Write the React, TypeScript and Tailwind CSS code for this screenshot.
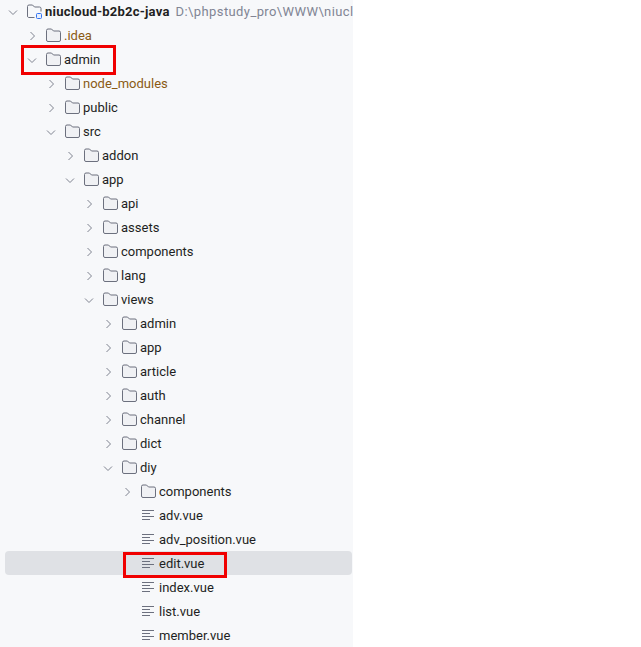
const rows: { name: string; depth: number; kind: "open" | "closed" | "file"; dim?: boolean; box?: string; selected?: boolean }[] = [
  { name: ".idea", depth: 1, kind: "closed", dim: true },
  { name: "admin", depth: 1, kind: "open", box: "left-[21px] top-[-2px] w-[95px] h-[30px]" },
  { name: "node_modules", depth: 2, kind: "closed", dim: true },
  { name: "public", depth: 2, kind: "closed" },
  { name: "src", depth: 2, kind: "open" },
  { name: "addon", depth: 3, kind: "closed" },
  { name: "app", depth: 3, kind: "open" },
  { name: "api", depth: 4, kind: "closed" },
  { name: "assets", depth: 4, kind: "closed" },
  { name: "components", depth: 4, kind: "closed" },
  { name: "lang", depth: 4, kind: "closed" },
  { name: "views", depth: 4, kind: "open" },
  { name: "admin", depth: 5, kind: "closed" },
  { name: "app", depth: 5, kind: "closed" },
  { name: "article", depth: 5, kind: "closed" },
  { name: "auth", depth: 5, kind: "closed" },
  { name: "channel", depth: 5, kind: "closed" },
  { name: "dict", depth: 5, kind: "closed" },
  { name: "diy", depth: 5, kind: "open" },
  { name: "components", depth: 6, kind: "closed" },
  { name: "adv.vue", depth: 6, kind: "file" },
  { name: "adv_position.vue", depth: 6, kind: "file" },
  { name: "edit.vue", depth: 6, kind: "file", selected: true, box: "left-[123px] top-[1px] w-[104px] h-[26px]" },
  { name: "index.vue", depth: 6, kind: "file" },
  { name: "list.vue", depth: 6, kind: "file" },
  { name: "member.vue", depth: 6, kind: "file" },
];

function Chevron({ open }: { open: boolean }) {
  return (
    <svg width="16" height="16" viewBox="0 0 16 16" fill="none" stroke="#7f8390" strokeWidth="1" className="shrink-0">
      {open ? <path d="M4 6.5l4 4 4-4" /> : <path d="M6.5 4l4 4-4 4" />}
    </svg>
  );
}

function Folder() {
  return (
    <svg width="17" height="17" viewBox="0 0 17 17" fill="#f0f1f4" stroke="#6c707e" strokeWidth="1" className="shrink-0">
      <path d="M1.5 3.5a1.5 1.5 0 0 1 1.5-1.5h3.5l2 2h5.5a1.5 1.5 0 0 1 1.5 1.5v7.5a1.5 1.5 0 0 1-1.5 1.5h-11a1.5 1.5 0 0 1-1.5-1.5z" />
    </svg>
  );
}

function FileLines() {
  return (
    <svg width="17" height="17" viewBox="0 0 17 17" fill="none" stroke="#6c707e" strokeWidth="1" className="shrink-0">
      <path d="M2 3.5h12M2 6.5h8M2 9.5h12M2 12.5h8" />
    </svg>
  );
}

function RootFolder() {
  return (
    <svg width="17" height="17" viewBox="0 0 17 17" fill="none" className="shrink-0">
      <path d="M8.5 14.5h-6a1.5 1.5 0 0 1-1-1.5v-9.5a1.5 1.5 0 0 1 1.5-1.5h3.5l2 2h5a1.5 1.5 0 0 1 1.5 1.5v3" stroke="#6c707e" />
      <rect x="10.5" y="10.5" width="5" height="5" rx="1" fill="#e7effd" stroke="#3574f0" />
    </svg>
  );
}

export default function App() {
  return (
    <div className="h-[647px] w-[641px] overflow-hidden bg-white font-['Roboto','Noto_Sans',sans-serif] text-[13px] text-[#1e1f22]">
      <div className="h-full w-[353px] overflow-hidden bg-[#f7f8fa]">
        {/* Project root */}
        <div className="mt-[-1px] flex h-6 items-center pl-[5px] pt-[1px] whitespace-nowrap">
          <Chevron open />
          <span className="ml-[5px]"><RootFolder /></span>
          <span className="ml-[2px] font-bold tracking-[0.22px]">niucloud-b2b2c-java</span>
          <span className="ml-[6px] tracking-[0.4px] text-[#818594]">D:\phpstudy_pro\WWW\niucloud</span>
        </div>

        {rows.map((r, i) => (
          <div key={i} className="relative h-6">
            {r.selected && <div className="absolute left-[5px] right-[1px] top-0 h-6 rounded-[4px] bg-[#dfe1e5]" />}
            <div className="relative flex h-6 items-center whitespace-nowrap pt-[1px]" style={{ paddingLeft: 5 + r.depth * 19 }}>
              {r.kind === "file" ? <span className="w-4 shrink-0" /> : <Chevron open={r.kind === "open"} />}
              <span className="ml-[-5px] pl-[10px]">{r.kind === "file" ? <FileLines /> : <Folder />}</span>
              <span className={`ml-[2px] ${r.dim ? "text-[#8a5a14]" : ""}`}>{r.name}</span>
            </div>
            {r.box && <div className={`absolute border-[3px] border-[#f00000] ${r.box}`} />}
          </div>
        ))}
      </div>
    </div>
  );
}
